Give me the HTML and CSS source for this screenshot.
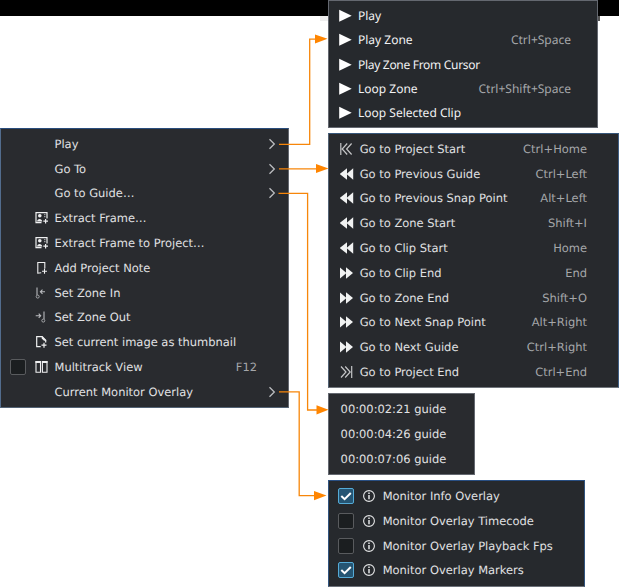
FILE: index.html
```html
<!DOCTYPE html>
<html lang="en">
<head>
<meta charset="utf-8">
<title>Monitor menu</title>
<link rel="stylesheet" href="styles.css">
</head>
<body>
<svg class="symbols" width="0" height="0">
  <symbol id="play" viewBox="0 0 14 14"><path d="M.2 .8L12.7 6.8L.2 12.8Z" fill="#fff"/></symbol>
  <symbol id="rewind" viewBox="0 0 14 14"><path d="M7 1.2V12.8L-.3 7ZM13.2 1.2V12.8L6.5 7Z" fill="#f1f2f2"/></symbol>
  <symbol id="forward" viewBox="0 0 14 14"><path d="M-.3 1.2V12.8L6.5 7ZM6 1.2V12.8L13 7Z" fill="#f1f2f2"/></symbol>
  <symbol id="first" viewBox="0 0 14 14"><path d="M.8 1V13M7.2 1.5L2.2 7L7.2 12.5M11.6 1.5L6.6 7L11.6 12.5" fill="none" stroke="#c5c6c8" stroke-width="1.2"/></symbol>
  <symbol id="last" viewBox="0 0 14 14"><path d="M11.7 1V13M1 1.5L6 7L1 12.5M5.2 1.5L10.2 7L5.2 12.5" fill="none" stroke="#c5c6c8" stroke-width="1.2"/></symbol>
  <symbol id="frame" viewBox="0 0 14 14"><path d="M6.5 11.7H1V1.7H12V7.5M8.3 10.2H13M10.6 7.9V12.6" fill="none" stroke="#eff0f1" stroke-width="1.2"/><circle cx="4.8" cy="4.8" r="1.8" fill="#eff0f1"/><path d="M2 10.5C2.3 7 6.9 7 7.3 10.5Z" fill="#eff0f1"/><path d="M9 3.7H10.5M9 5.7H10.5" stroke="#aeb0b3"/></symbol>
  <symbol id="note" viewBox="0 0 14 14"><path d="M6.2 11.7L2.8 12.2V1.5H9.8V7.5M7 10.2H12M9.5 7.7V12.7" fill="none" stroke="#eff0f1" stroke-width="1.1"/></symbol>
  <symbol id="zone-in" viewBox="0 0 14 14"><path d="M2 1.5V9M10 5.8H5.4M7.5 3.7L5.4 5.8L7.5 7.9" fill="none" stroke="#b9bbbe" stroke-width="1.1"/><circle cx="2.7" cy="10.6" r="1.5" fill="none" stroke="#a4a6a9"/></symbol>
  <symbol id="zone-out" viewBox="0 0 14 14"><path d="M9 1.5V9M.7 5.8H5.7M3.7 3.7L5.7 5.8L3.7 7.9" fill="none" stroke="#b9bbbe" stroke-width="1.1"/><circle cx="8.3" cy="10.6" r="1.5" fill="none" stroke="#a4a6a9"/></symbol>
  <symbol id="thumb" viewBox="0 0 14 14"><path d="M5.7 11.7H1.7V1.7H7.2L10.7 5.2V7.5M6.5 10.2H11.5M9 7.7V12.7" fill="none" stroke="#eff0f1" stroke-width="1.2"/><path d="M6.7 1L11.5 5.8H9L6.7 3.5Z" fill="#eff0f1"/></symbol>
  <symbol id="tracks" viewBox="0 0 14 14"><path d="M1 1.5H5.5V12.3H1ZM7.4 1.5H12V12.3H7.4Z" fill="none" stroke="#eff0f1" stroke-width="1.1"/><path d="M.5 2H6M6.9 2H12.5" stroke="#eff0f1" stroke-width="2"/></symbol>
  <symbol id="info" viewBox="0 0 14 14"><circle cx="7" cy="7" r="5.4" fill="none" stroke="#e5e6e7" stroke-width="1.1"/><path d="M7 6V10.3M7 3.5V5" stroke="#e5e6e7" stroke-width="1.5"/></symbol>
  <symbol id="chevron" viewBox="0 0 8 12"><path d="M1.5 1.3L6.3 6L1.5 10.7" fill="none" stroke="#bbbdc0" stroke-width="1.3"/></symbol>
  <symbol id="check" viewBox="0 0 14 14"><path d="M2.3 7L5.6 10.2L11.8 4" fill="none" stroke="#fff" stroke-width="2"/></symbol>
</svg>

<main class="diagram">
  <section class="menu main-menu">
    <div class="row"><i class="box-slot"></i><i class="icon"></i><span class="label">Play</span><svg class="chevron"><use href="#chevron"/></svg></div>
    <div class="row"><i class="box-slot"></i><i class="icon"></i><span class="label">Go To</span><svg class="chevron"><use href="#chevron"/></svg></div>
    <div class="row"><i class="box-slot"></i><i class="icon"></i><span class="label">Go to Guide…</span><svg class="chevron"><use href="#chevron"/></svg></div>
    <div class="row"><i class="box-slot"></i><svg class="icon"><use href="#frame"/></svg><span class="label">Extract Frame…</span></div>
    <div class="row"><i class="box-slot"></i><svg class="icon"><use href="#frame"/></svg><span class="label">Extract Frame to Project…</span></div>
    <div class="row"><i class="box-slot"></i><svg class="icon"><use href="#note"/></svg><span class="label">Add Project Note</span></div>
    <div class="row"><i class="box-slot"></i><svg class="icon"><use href="#zone-in"/></svg><span class="label">Set Zone In</span></div>
    <div class="row"><i class="box-slot"></i><svg class="icon"><use href="#zone-out"/></svg><span class="label">Set Zone Out</span></div>
    <div class="row"><i class="box-slot"></i><svg class="icon"><use href="#thumb"/></svg><span class="label">Set current image as thumbnail</span></div>
    <div class="row"><i class="box-slot checkbox"></i><svg class="icon"><use href="#tracks"/></svg><span class="label">Multitrack View</span><span class="key">F12</span></div>
    <div class="row"><i class="box-slot"></i><i class="icon"></i><span class="label">Current Monitor Overlay</span><svg class="chevron"><use href="#chevron"/></svg></div>
  </section>

  <div class="submenus">
    <section class="menu play-menu">
      <div class="row"><svg class="icon"><use href="#play"/></svg><span class="label">Play</span></div>
      <div class="row"><svg class="icon"><use href="#play"/></svg><span class="label">Play Zone</span><span class="key">Ctrl+Space</span></div>
      <div class="row"><svg class="icon"><use href="#play"/></svg><span class="label tight">Play Zone From Cursor</span></div>
      <div class="row"><svg class="icon"><use href="#play"/></svg><span class="label">Loop Zone</span><span class="key">Ctrl+Shift+Space</span></div>
      <div class="row"><svg class="icon"><use href="#play"/></svg><span class="label">Loop Selected Clip</span></div>
    </section>
    <section class="menu goto-menu">
      <div class="row"><svg class="icon"><use href="#first"/></svg><span class="label">Go to Project Start</span><span class="key">Ctrl+Home</span></div>
      <div class="row"><svg class="icon"><use href="#rewind"/></svg><span class="label">Go to Previous Guide</span><span class="key">Ctrl+Left</span></div>
      <div class="row"><svg class="icon"><use href="#rewind"/></svg><span class="label">Go to Previous Snap Point</span><span class="key">Alt+Left</span></div>
      <div class="row"><svg class="icon"><use href="#rewind"/></svg><span class="label">Go to Zone Start</span><span class="key">Shift+I</span></div>
      <div class="row"><svg class="icon"><use href="#rewind"/></svg><span class="label">Go to Clip Start</span><span class="key">Home</span></div>
      <div class="row"><svg class="icon"><use href="#forward"/></svg><span class="label">Go to Clip End</span><span class="key">End</span></div>
      <div class="row"><svg class="icon"><use href="#forward"/></svg><span class="label">Go to Zone End</span><span class="key">Shift+O</span></div>
      <div class="row"><svg class="icon"><use href="#forward"/></svg><span class="label">Go to Next Snap Point</span><span class="key">Alt+Right</span></div>
      <div class="row"><svg class="icon"><use href="#forward"/></svg><span class="label">Go to Next Guide</span><span class="key">Ctrl+Right</span></div>
      <div class="row"><svg class="icon"><use href="#last"/></svg><span class="label">Go to Project End</span><span class="key">Ctrl+End</span></div>
    </section>
    <section class="menu guide-menu">
      <div class="row"><span class="label">00:00:02:21 guide</span></div>
      <div class="row"><span class="label">00:00:04:26 guide</span></div>
      <div class="row"><span class="label">00:00:07:06 guide</span></div>
    </section>
    <section class="menu overlay-menu">
      <div class="row"><i class="checkbox checked"><svg><use href="#check"/></svg></i><svg class="icon"><use href="#info"/></svg><span class="label">Monitor Info Overlay</span></div>
      <div class="row"><i class="checkbox"></i><svg class="icon"><use href="#info"/></svg><span class="label">Monitor Overlay Timecode</span></div>
      <div class="row"><i class="checkbox"></i><svg class="icon"><use href="#info"/></svg><span class="label">Monitor Overlay Playback Fps</span></div>
      <div class="row"><i class="checkbox checked"><svg><use href="#check"/></svg></i><svg class="icon"><use href="#info"/></svg><span class="label">Monitor Overlay Markers</span></div>
    </section>
  </div>

  <svg class="connectors" viewBox="0 0 619 587">
    <path d="M320 16H328V21H320Z" fill="#eee"/>
    <path d="M598 16H600V21H598Z" fill="#555"/>
    <path d="M279 144.3H309.7V39.2H316M279 168.8H317M278.5 193.3H307.6V410H317M279 391.8H299.2V495.7H315" fill="none" stroke="#f7860a" stroke-width="1.3"/>
    <path d="M315 34.4L327.5 38.8L315 43.4ZM316 164L328.5 168.5L316 173ZM316.5 405.2L328.5 409.7L316.5 414.5ZM314 491L326.5 495.5L314 500.3Z" fill="#ff8500"/>
  </svg>
</main>
</body>
</html>
```

FILE: styles.css
```css
* { box-sizing: border-box; }

body {
  margin: 0;
  width: 619px;
  height: 587px;
  overflow: hidden;
  background: linear-gradient(#000 16px, #fff 16px);
  font: 11.47px/16px "DejaVu Sans", sans-serif;
  text-rendering: geometricPrecision;
  color: #e1e2e4;
}

.symbols { position: absolute; }

.diagram {
  position: relative;
  display: flex;
  align-items: flex-start;
  gap: 39px;
  height: 587px;
}

.menu {
  background: #292b2f;
  border: 1px solid #646870;
}

.row {
  display: flex;
  align-items: center;
  height: 24.8px;
  white-space: nowrap;
}

.icon {
  flex: none;
  width: 14px;
  height: 14px;
  overflow: visible;
}

.label { flex: 1; }

.key { color: #a5a7aa; }

.main-menu {
  width: 289px;
  height: 280px;
  margin-top: 128px;
  padding: 2.4px 0 0 9px;
  border-color: #294c7c #646870 #526274 #526c8d;
}

.main-menu .icon { margin: 0 6px 0 8.5px; }
.main-menu .key { margin-right: 31px; }

.box-slot {
  flex: none;
  width: 16px;
  height: 16px;
}

.chevron {
  width: 8px;
  height: 12px;
  margin-right: 12.5px;
}

.checkbox {
  flex: none;
  display: flex;
  width: 16px;
  height: 16px;
  background: #1b1e20;
  border: 1px solid #595b5e;
  border-radius: 2px;
}

.checkbox.checked {
  background: #255573;
  border-color: #55abd7;
}

.checkbox svg {
  width: 14px;
  height: 14px;
}

.submenus {
  display: flex;
  flex-direction: column;
  align-items: flex-start;
  gap: 5px;
}

.play-menu {
  width: 270px;
  height: 128px;
  padding: 3px 26px 0 10px;
  background: #26292d;
  font: 12px/16px "Noto Sans", sans-serif;
  color: #f2f2f3;
}

.play-menu .row { height: 24.3px; }
.play-menu .label { margin-left: 5px; }
.play-menu .tight { letter-spacing: -0.3px; }

.goto-menu {
  width: 291px;
  height: 255px;
  padding: 2.4px 31px 0 11px;
  background: #27292d;
  border-color: #36567a #405f85 #70757c #526274;
}

.goto-menu .label { margin-left: 5.7px; }

.guide-menu {
  width: 147px;
  height: 82px;
  padding: 3px 0 0 11.6px;
}

.overlay-menu {
  width: 257px;
  height: 107px;
  padding: 2.7px 0 0 9px;
  background: #26292d;
  border-color: #294f83 #31547f #6c7179 #31547f;
}

.overlay-menu .icon { margin: 0 6.7px 0 8px; }

.connectors {
  position: absolute;
  inset: 0;
  width: 619px;
  height: 587px;
}
```
